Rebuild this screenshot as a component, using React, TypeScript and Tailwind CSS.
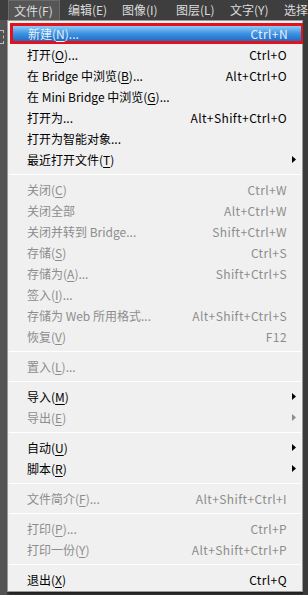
import React from "react";

type Item =
  | { sep: true }
  | {
      sep?: false;
      label: string;
      key?: string;
      tail?: string;
      shortcut?: string;
      disabled?: boolean;
      sub?: boolean;
      active?: boolean;
    };

const items: Item[] = [
  { label: "新建", key: "N", tail: "...", shortcut: "Ctrl+N", active: true },
  { label: "打开", key: "O", tail: "...", shortcut: "Ctrl+O" },
  { label: "在 Bridge 中浏览", key: "B", tail: "...", shortcut: "Alt+Ctrl+O" },
  { label: "在 Mini Bridge 中浏览", key: "G", tail: "..." },
  { label: "打开为...", shortcut: "Alt+Shift+Ctrl+O" },
  { label: "打开为智能对象..." },
  { label: "最近打开文件", key: "T", sub: true },
  { sep: true },
  { label: "关闭", key: "C", shortcut: "Ctrl+W", disabled: true },
  { label: "关闭全部", shortcut: "Alt+Ctrl+W", disabled: true },
  { label: "关闭并转到 Bridge...", shortcut: "Shift+Ctrl+W", disabled: true },
  { label: "存储", key: "S", shortcut: "Ctrl+S", disabled: true },
  { label: "存储为", key: "A", tail: "...", shortcut: "Shift+Ctrl+S", disabled: true },
  { label: "签入", key: "I", tail: "...", disabled: true },
  { label: "存储为 Web 所用格式...", shortcut: "Alt+Shift+Ctrl+S", disabled: true },
  { label: "恢复", key: "V", shortcut: "F12", disabled: true },
  { sep: true },
  { label: "置入", key: "L", tail: "...", disabled: true },
  { sep: true },
  { label: "导入", key: "M", sub: true },
  { label: "导出", key: "E", sub: true, disabled: true },
  { sep: true },
  { label: "自动", key: "U", sub: true },
  { label: "脚本", key: "R", sub: true },
  { sep: true },
  { label: "文件简介", key: "F", tail: "...", shortcut: "Alt+Shift+Ctrl+I", disabled: true },
  { sep: true },
  { label: "打印", key: "P", tail: "...", shortcut: "Ctrl+P", disabled: true },
  { label: "打印一份", key: "Y", shortcut: "Alt+Shift+Ctrl+P", disabled: true },
  { sep: true },
  { label: "退出", key: "X", shortcut: "Ctrl+Q" },
];

const menuBar = ["文件(F)", "编辑(E)", "图像(I)", "图层(L)", "文字(Y)", "选择"];

const Arrow = ({ color }: { color: string }) => (
  <svg width="4" height="7" viewBox="0 0 4 7">
    <path d="M0 0 L4 3.5 L0 7 Z" fill={color} />
  </svg>
);

const App = () => {
  return (
    <div
      className="w-[308px] h-[595px] overflow-hidden bg-[#3a3a3a] flex flex-col"
      style={{ fontFamily: '"Noto Sans CJK SC", "Noto Sans", sans-serif' }}
    >
      {/* top menu bar */}
      <div className="h-[20px] flex items-center bg-[#3e3e3e] text-[12px] text-[#dcdcdc] shrink-0 whitespace-nowrap">
        {menuBar.map((m, i) => (
          <div
            key={m}
            className={
              i === 0
                ? "h-full flex items-center ml-[8px] pl-[5px] w-[52px] shrink-0 bg-[#565656] border-x border-t border-[#6a6a6a]"
                : "h-full flex items-center w-[54px] pl-[8px] shrink-0"
            }
          >
            {m}
          </div>
        ))}
      </div>

      <div className="flex flex-1 min-h-0">
        <div className="w-[7px] bg-[#535353] shrink-0 pt-[10px]">
          <div className="w-[4px] h-[14px] border-y border-r border-dashed border-[#bdbdbd]" />
        </div>

        <div className="w-[296px] h-[572px] bg-[#f0f0f0] border border-[#9a9a9a] pt-[2px] pb-[2px] text-[12px] shadow-[2px_2px_2px_rgba(0,0,0,0.5)] shrink-0">
          {items.map((it, i) => {
            if (it.sep) {
              return (
                <div key={i} className="h-[9px] flex items-center pl-[1px] pr-[1px]">
                  <div className="w-full h-px bg-[#a0a0a0] border-b border-white" />
                </div>
              );
            }
            const color = it.active ? "text-[#e6f0fa]" : it.disabled ? "text-[#8d8d8d]" : "text-black";
            const label = (
              <span className="whitespace-nowrap">
                {it.label}
                {it.key && (
                  <>
                    (<span className="underline underline-offset-2">{it.key}</span>)
                  </>
                )}
                {it.tail}
              </span>
            );
            if (it.active) {
              return (
                <div
                  key={i}
                  className={`h-[21px] ml-[2px] -mr-[2px] border-[3px] border-[#e4111a] flex items-center justify-between pl-[15px] pr-[13px] bg-gradient-to-b from-[#8fcbf7] via-[#3d92e3] to-[#1f6cc4] ${color}`}
                >
                  {label}
                  <span className="tracking-[0.4px]">{it.shortcut}</span>
                </div>
              );
            }
            return (
              <div key={i} className={`h-[21px] flex items-center pl-[19px] pr-[15px] ${color}`}>
                <div className="flex-1">{label}</div>
                {it.shortcut && <span className="whitespace-nowrap tracking-[0.4px]">{it.shortcut}</span>}
                {it.sub && (
                  <span className="-mr-[9px]">
                    <Arrow color={it.disabled ? "#8d8d8d" : "#000"} />
                  </span>
                )}
              </div>
            );
          })}
        </div>

        <div className="flex-1 bg-[#3a3a3a]" />
      </div>
    </div>
  );
};

export default App;
